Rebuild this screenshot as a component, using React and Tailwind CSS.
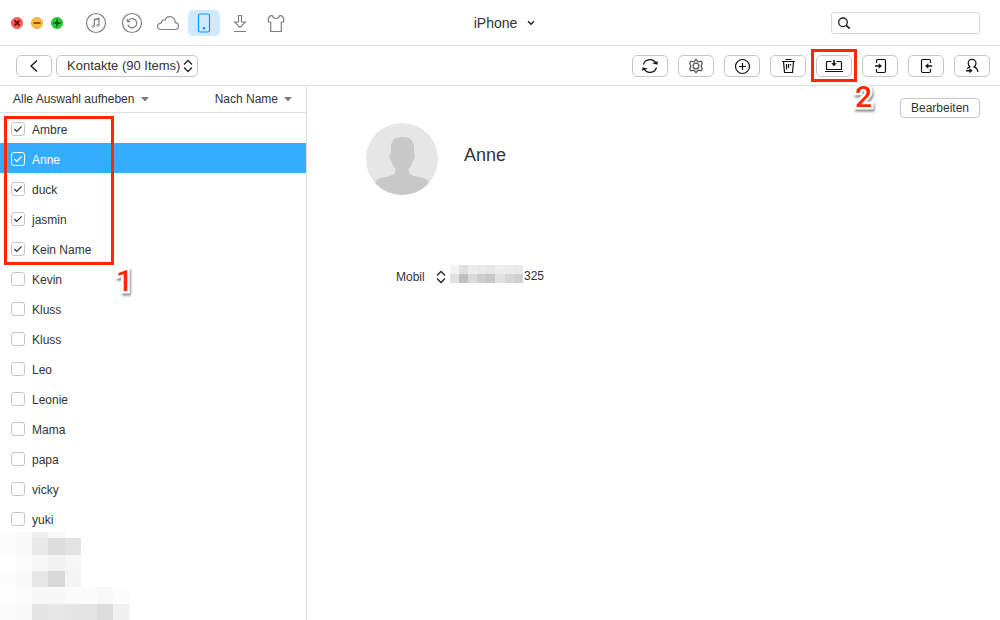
import React from "react";

const contacts = [
  ["Ambre", true],
  ["Anne", true],
  ["duck", true],
  ["jasmin", true],
  ["Kein Name", true],
  ["Kevin", false],
  ["Kluss", false],
  ["Kluss", false],
  ["Leo", false],
  ["Leonie", false],
  ["Mama", false],
  ["papa", false],
  ["vicky", false],
  ["yuki", false],
];

function Stroke({ children, size = 20, className = "" }) {
  return (
    <svg
      width={size}
      height={size}
      viewBox={`0 0 ${size} ${size}`}
      fill="none"
      stroke="currentColor"
      strokeWidth="1.2"
      className={className}
      aria-hidden="true"
    >
      {children}
    </svg>
  );
}

function UpDown() {
  return (
    <svg width="10" height="14" viewBox="0 0 10 14" fill="none" stroke="#222" strokeWidth="1.3" aria-hidden="true">
      <path d="M1 5.5 5 1.5l4 4M1 8.5l4 4 4-4" />
    </svg>
  );
}

function Caret() {
  return (
    <svg width="8" height="5" viewBox="0 0 8 5" fill="#7a7a7a" aria-hidden="true">
      <path d="M0 0h8L4 4.6z" />
    </svg>
  );
}

function Light({ label, color, ring, mark, children }) {
  return (
    <button aria-label={label} className="size-3">
      <svg width="12" height="12" viewBox="0 0 12 12" aria-hidden="true">
        <circle cx="6" cy="6" r="5.6" fill={color} stroke={ring} strokeWidth=".7" />
        <g stroke={mark} strokeWidth="1.8" fill="none">{children}</g>
      </svg>
    </button>
  );
}

const sections = [
  {
    label: "Musik",
    icon: (
      <>
        <circle cx="11" cy="11" r="9.5" />
        <path d="M9.3 14V7.200l4.700-1v7" />
        <path d="M9.300 8.200 14 7.200" strokeWidth=".8" />
        <ellipse cx="8.200" cy="14.400" rx="1.200" ry="1" strokeWidth=".9" />
        <ellipse cx="12.900" cy="13.400" rx="1.200" ry="1" strokeWidth=".9" />
      </>
    ),
  },
  {
    label: "Backup",
    icon: (
      <>
        <circle cx="11" cy="11" r="9.5" />
        <path d="M7 9.200a4.600 4.600 0 1 1-.2 3.600" />
        <path d="M6.300 6.800v2.800h3" />
      </>
    ),
  },
  {
    label: "iCloud",
    icon: <path d="M4.200 17.500h13.600c2.300 0 3.700-1.400 3.700-3.300 0-2.100-1.500-3.400-3.400-3.500.2-3.500-2-6-5.100-6-2.500 0-4.300 1.300-5 3.400-1.900-.5-3.500.7-3.700 2.700C2.200 11.200.5 12.400.5 14.300c0 1.900 1.500 3.200 3.700 3.200z" />,
  },
  {
    label: "Gerät",
    active: true,
    icon: (
      <>
        <rect x="5.500" y="2" width="11" height="18" rx="1.800" />
        <circle cx="11" cy="16.300" r=".7" fill="currentColor" />
      </>
    ),
  },
  {
    label: "Download",
    icon: <path d="M9.500 3.500h3v6.500h3.800L11 15.500 5.700 10h3.800zM5 19.500h12" />,
  },
  {
    label: "Designs",
    icon: <path d="M5.700 3.700h1.600c1 3.700 6.400 3.700 7.400 0h1.600l2.400 2.300v4h-2.400v9.500H5.700V10H3.300V6z" />,
  },
];

const tools = [
  {
    label: "Aktualisieren",
    icon: (
      <>
        <path d="M3.500 8.500A6.700 6.700 0 0 1 16 7.500M16.500 11.500A6.700 6.700 0 0 1 4 12.500" />
        <path d="m12.500 7.200 4.800 1.300.4-3zM7.500 12.800l-4.800-1.300-.4 3z" fill="currentColor" strokeWidth=".3" />
      </>
    ),
  },
  {
    label: "Einstellungen",
    muted: true,
    icon: (
      <>
        <path d="m10 3.300 2 2.500 3.100-.6 1.200 1.900-1.200 2.900 1.200 2.900-1.200 1.900-3.100-.6-2 2.500-2-2.500-3.100.6-1.200-1.900L4.900 10 3.700 7.100l1.200-1.900 3.100.6z" />
        <circle cx="10" cy="10" r="2.900" />
      </>
    ),
  },
  {
    label: "Hinzufügen",
    icon: (
      <>
        <circle cx="10.500" cy="10.500" r="7" />
        <path d="M7 10.500h7M10.500 7v7" />
      </>
    ),
  },
  {
    label: "Löschen",
    icon: <path d="M4 5.500h13M7.500 3.500h6M5.500 5.500l1 11h8l1-11M8.500 8v5.500M10.500 8v4M12.500 8v1.500" />,
  },
  {
    label: "Auf Computer übertragen",
    marked: true,
    icon: (
      <>
        <path d="M7.500 5.500h-4q-1 0-1 1v7h15v-7q0-1-1-1h-4M1 15.500h18" />
        <path d="M10 4v4" strokeWidth="1.600" />
        <path d="M7.500 7.300h5L10 10.200z" fill="currentColor" strokeWidth=".2" />
      </>
    ),
  },
  {
    label: "Auf Gerät übertragen",
    icon: (
      <>
        <path d="M6.500 7V4.700q0-1.200 1.200-1.200h6.600q1.200 0 1.200 1.200v10.600q0 1.200-1.200 1.200H7.700q-1.200 0-1.200-1.200V13" />
        <path d="M5 10h4" strokeWidth="1.600" />
        <path d="m8.800 7.500 3 2.500-3 2.500z" fill="currentColor" strokeWidth=".2" />
      </>
    ),
  },
  {
    label: "Vom Gerät übertragen",
    icon: (
      <>
        <path d="M14.500 7V4.700q0-1.200-1.200-1.200H6.700q-1.200 0-1.200 1.200v10.600q0 1.200 1.200 1.200h6.600q1.200 0 1.200-1.200V13" />
        <path d="M12 10h4.200" strokeWidth="1.600" />
        <path d="m12.200 7.500-3 2.500 3 2.500z" fill="currentColor" strokeWidth=".2" />
      </>
    ),
  },
  {
    label: "Kontakt übertragen",
    icon: (
      <>
        <path d="M8.300 10.900C7 10 6.200 8.700 6.200 7.200a3.900 3.900 0 0 1 7.800 0c0 1.500-.8 2.800-2.100 3.700 2.500.8 3.800 2.500 4 5.100M8.300 10.900c-1.600.5-2.600 1.200-3.200 2.100" />
        <path d="M4 14.700h4" strokeWidth="1.600" />
        <path d="m7.500 12.300 3 2.400-3 2.400z" fill="currentColor" strokeWidth=".2" />
      </>
    ),
  },
];

function Callout({ children, className }) {
  return (
    <span
      aria-hidden="true"
      className={`pointer-events-none absolute z-10 font-[Roboto,sans-serif] text-[30px] leading-8 [-webkit-text-stroke:5px_#fff] [paint-order:stroke_fill] text-[#ff2600] font-medium drop-shadow-[1px_2px_1px_#0007] ${className}`}
    >
      {children}
    </span>
  );
}

function ContactRow({ name, checked, selected }) {
  return (
    <li className={selected ? "bg-[#33aeff] text-white" : ""}>
      <label className="flex h-[30px] items-center gap-[7px] pt-0.5 pl-[11px]">
        <span className="grid place-items-center">
          <input
            type="checkbox"
            defaultChecked={checked}
            className={`peer size-[14px] appearance-none rounded-[3px] border [grid-area:1/1] ${
              selected ? "border-white" : "border-[#c6c6c6] bg-white"
            }`}
          />
          <svg
            width="10"
            height="8"
            viewBox="0 0 10 8"
            fill="none"
            stroke="currentColor"
            strokeWidth="1.200"
            className="pointer-events-none invisible [grid-area:1/1] peer-checked:visible"
            aria-hidden="true"
          >
            <path d="m1.300 4 2.400 2.400L8.700 1.400" />
          </svg>
        </span>
        <span className="pt-0.5">{name}</span>
      </label>
    </li>
  );
}

const listCells = [
  [0, 6, ["#fdfdfd", "#fafafa", "#eeeeee", "#f9f9f9"]],
  [6, 17, ["#fcfcfc", "#f9f9f9", "#e8e8e8", "#dcdcdc", "#e3e3e3", "#fefefe"]],
  [23, 16, ["#fefefe", "#fcfcfc", "#f7f7f7", "#f2f2f2", "#f6f6f6"]],
  [39, 16, ["#fcfcfc", "#f9f9f9", "#e7e7e7", "#d9d9d9", "#f4f4f4"]],
  [55, 17, ["#fdfdfd", "#fcfcfc", "#f7f7f7", "#f7f7f7", "#fbfbfb", "#fbfbfb", "#f8f8f8", "#fcfcfc"]],
  [72, 16, ["#fbfbfb", "#f9f9f9", "#e4e4e4", "#e7e7e7", "#e5e5e5", "#e3e3e3", "#dcdcdc", "#f0f0f0"]],
];
const listStops = [0, 16, 32, 48, 65, 81, 97, 113, 129];

const phoneCells = [
  [0, 9, ["#f3f3f3", "#dfdfdf", "#ececec", "#e9e9e9", "#e6e6e6", "#ededed", "#ebebeb", "#e8e8e8"]],
  [9, 9, ["#e1e1e1", "#bfbfbf", "#dadada", "#cecece", "#c7c7c7", "#e0e0e0", "#d6d6d6", "#cfcfcf"]],
];
const phoneStops = [0, 9, 18, 27, 36, 45, 55, 64, 73];

function Mosaic({ cells, stops, width, height, className }) {
  return (
    <svg width={width} height={height} shapeRendering="crispEdges" className={className} aria-hidden="true">
      {cells.map(([y, h, colors]) =>
        colors.map((fill, i) => (
          <rect key={`${y}-${i}`} x={stops[i]} y={y} width={stops[i + 1] - stops[i]} height={h} fill={fill} />
        ))
      )}
    </svg>
  );
}

export default function App() {
  return (
    <div className="flex min-h-screen flex-col overflow-hidden rounded-t-md bg-white font-['Liberation_Sans',Arial,sans-serif] text-xs text-[#333]">
      <header className="grid h-[46px] grid-cols-[1fr_auto_1fr] items-center border-b border-[#e0e0e0] pr-5 pl-[11px]">
        <div className="flex items-center gap-[17px]">
          <div className="flex gap-2">
            <Light label="Schließen" color="#fc605b" ring="#dd4742" mark="#760b08">
              <path d="m3.500 3.500 5 5m0-5-5 5" />
            </Light>
            <Light label="Minimieren" color="#fdbc40" ring="#dd9e33" mark="#985700">
              <path d="M2.500 6h7" />
            </Light>
            <Light label="Vergrößern" color="#27c93f" ring="#1aab29" mark="#006500">
              <path d="M2.500 6h7M6 2.500v7" />
            </Light>
          </div>
          <nav aria-label="Bereiche" className="flex gap-1">
            {sections.map((s) => (
              <button
                key={s.label}
                aria-label={s.label}
                className={`flex h-[26px] w-8 items-center justify-center rounded-[5px] ${
                  s.active ? "bg-[#d0e9fd] text-[#0c96f5]" : "text-[#808080]"
                }`}
              >
                <Stroke size={22}>{s.icon}</Stroke>
              </button>
            ))}
          </nav>
        </div>
        <button className="flex items-center gap-2.5 pl-[18px] text-sm">
          iPhone
          <svg width="8" height="6" viewBox="0 0 8 6" fill="none" stroke="#222" strokeWidth="1.500" aria-hidden="true">
            <path d="m1 1.200 3 3 3-3" />
          </svg>
        </button>
        <label className="flex h-[22px] w-[149px] items-center gap-1 justify-self-end rounded-[3px] border border-[#d9d9d9] pl-[5px]">
          <svg width="14" height="14" viewBox="0 0 14 14" fill="none" stroke="#222" strokeWidth="1.300" className="shrink-0" aria-hidden="true">
            <circle cx="6" cy="6.300" r="4.300" />
            <path d="m9.200 9.400 3.500 3.300" strokeWidth="1.800" />
          </svg>
          <input type="search" aria-label="Suchen" className="w-full min-w-0 bg-transparent outline-none" />
        </label>
      </header>

      <div className="flex h-10 items-center justify-between border-b border-[#e0e0e0] pr-2.5 pl-4">
        <div className="flex gap-1">
          <button aria-label="Zurück" className="flex h-[22px] w-9 items-center justify-center rounded-[5px] border border-[#c6c6c6]">
            <svg width="8" height="12" viewBox="0 0 8 12" fill="none" stroke="#111" strokeWidth="1.300" aria-hidden="true">
              <path d="M7 .5 1 6l6 5.500" />
            </svg>
          </button>
          <div className="grid items-center">
            <select
              aria-label="Kategorie"
              className="h-[22px] w-[142px] appearance-none rounded-[5px] border border-[#c6c6c6] bg-white pl-2.5 text-[13px] [grid-area:1/1]"
            >
              <option>Kontakte (90 Items)</option>
            </select>
            <span className="pointer-events-none mr-[5px] justify-self-end [grid-area:1/1]">
              <UpDown />
            </span>
          </div>
        </div>
        <div className="flex gap-2.5">
          {tools.map((t) => (
            <div key={t.label} className="relative">
              <button
                aria-label={t.label}
                className={`flex h-[22px] w-9 items-center justify-center rounded-[5px] border border-[#c6c6c6] ${
                  t.muted ? "text-[#555]" : "text-[#111]"
                }`}
              >
                <Stroke>{t.icon}</Stroke>
              </button>
              {t.marked && (
                <>
                  <span className="pointer-events-none absolute -inset-x-[5px] -top-1.5 -bottom-[5px] border-[3px] border-[#ff2600]" />
                  <Callout className="top-[26px] left-[39px]">2</Callout>
                </>
              )}
            </div>
          ))}
        </div>
      </div>

      <div className="flex flex-1">
        <aside className="w-[307px] shrink-0 border-r border-[#e0e0e0]">
          <div className="flex h-[27px] items-center justify-between border-b border-[#e0e0e0] pr-3.5 pl-[13px]">
            <button className="flex items-center gap-[7px]">
              Alle Auswahl aufheben <Caret />
            </button>
            <button className="flex items-center gap-1.5">
              Nach Name <Caret />
            </button>
          </div>
          <div className="relative">
            <ul>
              {contacts.map(([name, checked], i) => (
                <ContactRow key={i} name={name} checked={checked} selected={i === 1} />
              ))}
            </ul>
            <span className="pointer-events-none absolute top-[3px] left-1 h-[149px] w-[110px] border-[3px] border-[#ff2600]" />
            <Callout className="top-[152px] left-[116px]">1</Callout>
          </div>
          <Mosaic cells={listCells} stops={listStops} width={130} height={88} className="-mt-px block" />
        </aside>

        <main className="flex-1 pt-3 pr-5 pl-[59px]">
          <div className="flex items-start">
            <svg width="72" height="72" viewBox="0 0 72 72" className="mt-[25px]" role="img" aria-label="Anne">
              <defs>
                <clipPath id="avatar">
                  <circle cx="36" cy="36" r="36" />
                </clipPath>
              </defs>
              <circle cx="36" cy="36" r="36" fill="#e6e6e6" />
              <path
                clipPath="url(#avatar)"
                fill="#c8c8c8"
                d="M25 30c-.8-10 1-16 11.500-16S48.800 20 48 30c1.500.5 1 6-1.500 8-1 4-2 6-4 8 0 4 1 5.500 4.500 6.500 7 2 13 1.500 16 7V74H9V59.500c3-5.500 9-5 16-7 3.500-1 4.500-2.500 4.500-6.500-2-2-3-4-4-8-2.500-2-2.500-7.500-.5-8z"
              />
            </svg>
            <h1 className="mt-[45px] ml-[26px] text-lg leading-6">Anne</h1>
            <button className="ml-auto h-5 w-20 rounded-[4px] border border-[#c6c6c6] leading-4">Bearbeiten</button>
          </div>
          <div className="mt-[68px] ml-[30px] flex items-center">
            <button className="flex w-[54px] items-center justify-between pt-1.5 pr-1">
              Mobil <UpDown />
            </button>
            <Mosaic cells={phoneCells} stops={phoneStops} width={73} height={18} />
            <span className="pt-1 pl-px">325</span>
          </div>
        </main>
      </div>
    </div>
  );
}
